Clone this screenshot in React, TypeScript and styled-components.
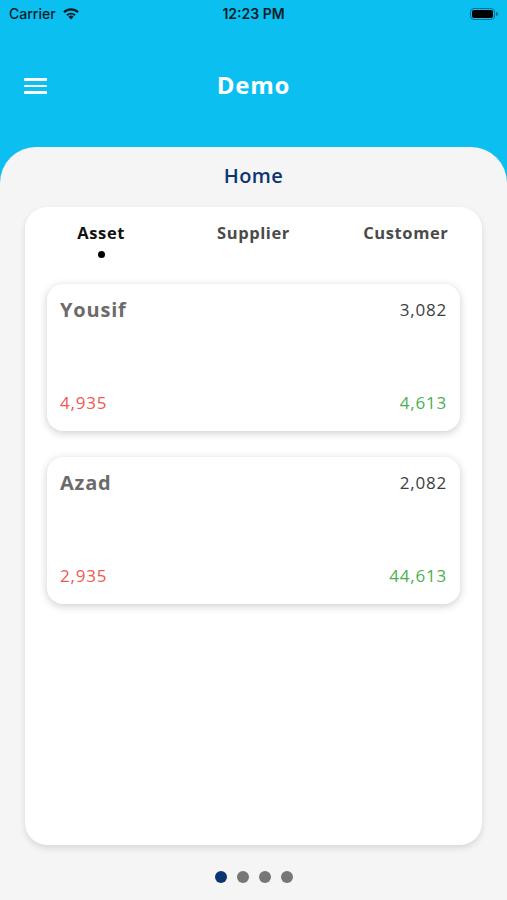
import React from "react";
import styled, { createGlobalStyle } from "styled-components";

const GlobalStyle = createGlobalStyle`
  html, body {
    margin: 0;
    padding: 0;
    background: #f5f5f5;
  }
  * {
    box-sizing: border-box;
  }
`;

const Screen = styled.div`
  width: 507px;
  height: 900px;
  background: #0cbff1;
  display: flex;
  flex-direction: column;
  overflow: hidden;
  font-family: "Open Sans", "Liberation Sans", sans-serif;
`;

const StatusBar = styled.div`
  height: 27px;
  display: grid;
  grid-template-columns: 1fr auto 1fr;
  align-items: center;
  padding: 0 9px;
  font-family: Inter, "Liberation Sans", sans-serif;
  font-size: 14px;
  color: #0a1d26;
`;

const Carrier = styled.div`
  display: flex;
  align-items: center;
  gap: 6px;
  font-weight: 500;
`;

const Clock = styled.div`
  font-weight: 600;
`;

const BatteryWrap = styled.div`
  display: flex;
  justify-content: flex-end;
  align-items: center;
`;

const Battery = styled.div`
  position: relative;
  width: 25px;
  height: 12px;
  border: 1px solid #0a6f8c;
  border-radius: 4px;
  padding: 1px;
  margin-right: 3px;
  &::before {
    content: "";
    display: block;
    width: 100%;
    height: 100%;
    background: #000;
    border-radius: 2px;
  }
  &::after {
    content: "";
    position: absolute;
    right: -4px;
    top: 3px;
    width: 2px;
    height: 4px;
    background: #0a6f8c;
    border-radius: 0 2px 2px 0;
  }
`;

const NavBar = styled.div`
  height: 120px;
  display: grid;
  grid-template-columns: 60px 1fr 60px;
  align-items: center;
  padding-bottom: 2px;
`;

const MenuButton = styled.button`
  background: none;
  border: 0;
  padding: 0 0 0 24px;
  display: flex;
  flex-direction: column;
  gap: 4px;
  cursor: pointer;
  span {
    display: block;
    width: 23px;
    height: 2.5px;
    border-radius: 1px;
    background: #fff;
  }
`;

const Title = styled.h1`
  margin: 0 0 4px;
  text-align: center;
  color: #fff;
  font-size: 24px;
  font-weight: 700;
  letter-spacing: 0.8px;
`;

const Panel = styled.div`
  flex: 1;
  background: #f5f5f5;
  border-radius: 36px 36px 0 0;
  display: flex;
  flex-direction: column;
  align-items: center;
  padding: 0 25px;
`;

const PageTitle = styled.h2`
  margin: 15px 0 17px;
  color: #0b3673;
  font-size: 20px;
  font-weight: 600;
  line-height: 28px;
  letter-spacing: 0.4px;
`;

const Sheet = styled.div`
  width: 100%;
  height: 638px;
  background: #fff;
  border-radius: 22px;
  box-shadow: 0 3px 6px rgba(0, 0, 0, 0.12);
  padding: 14px 22px 0;
  display: flex;
  flex-direction: column;
`;

const Tabs = styled.div`
  display: grid;
  grid-template-columns: repeat(3, 1fr);
  margin: 0 -22px;
  height: 63px;
`;

const Tab = styled.div<{ $active?: boolean }>`
  display: flex;
  flex-direction: column;
  align-items: center;
  font-size: 16.5px;
  font-weight: 700;
  line-height: 24px;
  letter-spacing: 0.6px;
  color: ${(p) => (p.$active ? "#111" : "#4a4a4a")};
  &::after {
    content: "";
    width: 7px;
    height: 7px;
    margin-top: 6px;
    border-radius: 50%;
    background: ${(p) => (p.$active ? "#000" : "transparent")};
  }
`;

const CardList = styled.div`
  display: flex;
  flex-direction: column;
  gap: 26px;
`;

const Card = styled.div`
  height: 147px;
  border-radius: 16px;
  background: #fff;
  box-shadow: 0 2px 8px rgba(0, 0, 0, 0.2);
  padding: 12px 13px 17px;
  display: flex;
  flex-direction: column;
  justify-content: space-between;
`;

const CardRow = styled.div`
  display: flex;
  justify-content: space-between;
  align-items: center;
`;

const Name = styled.div`
  font-size: 20px;
  font-weight: 700;
  color: #6b6b6b;
  letter-spacing: 0.8px;
`;

const Amount = styled.div<{ $tone: "dark" | "red" | "green" }>`
  font-size: 17px;
  font-weight: 400;
  letter-spacing: 0.8px;
  color: ${(p) =>
    p.$tone === "red" ? "#ec5a52" : p.$tone === "green" ? "#4cb050" : "#3d3d3d"};
`;

const Pager = styled.div`
  display: flex;
  gap: 10px;
  margin-top: 26px;
`;

const Dot = styled.span<{ $active?: boolean }>`
  width: 12px;
  height: 12px;
  border-radius: 50%;
  background: ${(p) => (p.$active ? "#0b3673" : "#777")};
`;

const Wifi = () => (
  <svg width="18" height="13" viewBox="0 0 18 13">
    <path d="M9 12.5 6.4 9.7a3.7 3.7 0 0 1 5.2 0Z" fill="#0a1d26" />
    <path d="M4.3 7.6a6.6 6.6 0 0 1 9.4 0l-1.4 1.4a4.6 4.6 0 0 0-6.6 0Z" fill="#0a1d26" />
    <path d="M1.2 4.5a11 11 0 0 1 15.6 0l-1.5 1.5a8.9 8.9 0 0 0-12.6 0Z" fill="#0a1d26" />
  </svg>
);

const cards = [
  { name: "Yousif", total: "3,082", out: "4,935", inc: "4,613" },
  { name: "Azad", total: "2,082", out: "2,935", inc: "44,613" },
];

export default function App() {
  return (
    <>
      <GlobalStyle />
      <Screen>
        <StatusBar>
          <Carrier>
            Carrier <Wifi />
          </Carrier>
          <Clock>12:23 PM</Clock>
          <BatteryWrap>
            <Battery />
          </BatteryWrap>
        </StatusBar>
        <NavBar>
          <MenuButton aria-label="menu">
            <span />
            <span />
            <span />
          </MenuButton>
          <Title>Demo</Title>
          <div />
        </NavBar>
        <Panel>
          <PageTitle>Home</PageTitle>
          <Sheet>
            <Tabs>
              <Tab $active>Asset</Tab>
              <Tab>Supplier</Tab>
              <Tab>Customer</Tab>
            </Tabs>
            <CardList>
              {cards.map((c) => (
                <Card key={c.name}>
                  <CardRow>
                    <Name>{c.name}</Name>
                    <Amount $tone="dark">{c.total}</Amount>
                  </CardRow>
                  <CardRow>
                    <Amount $tone="red">{c.out}</Amount>
                    <Amount $tone="green">{c.inc}</Amount>
                  </CardRow>
                </Card>
              ))}
            </CardList>
          </Sheet>
          <Pager>
            <Dot $active />
            <Dot />
            <Dot />
            <Dot />
          </Pager>
        </Panel>
      </Screen>
    </>
  );
}
